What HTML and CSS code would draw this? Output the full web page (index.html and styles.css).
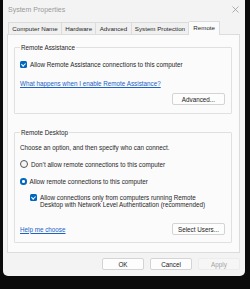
FILE: index.html
```html
<!DOCTYPE html>
<html lang="en">
<head>
    <meta charset="UTF-8">
    <meta name="viewport" content="width=device-width, initial-scale=1.0">
    <title>System Properties</title>
    <link rel="stylesheet" href="styles.css">
</head>
<body>
    <div class="window">
        <div class="titlebar">
            <span class="title">System Properties</span>
            <svg class="close" width="7" height="7" viewBox="0 0 7 7"><path d="M0.5 0.5L6.5 6.5M6.5 0.5L0.5 6.5" stroke="#9a9a9a" stroke-width="0.8"/></svg>
        </div>

        <div class="tabs">
            <div class="tab">Computer Name</div>
            <div class="tab">Hardware</div>
            <div class="tab">Advanced</div>
            <div class="tab">System Protection</div>
            <div class="tab active">Remote</div>
        </div>

        <div class="panel">
            <fieldset class="group group-assist">
                <legend>Remote Assistance</legend>
                <label class="option"><span class="check on"></span>Allow Remote Assistance connections to this computer</label>
                <a class="link link-assist" href="#">What happens when I enable Remote Assistance?</a>
                <div class="row-end">
                    <button class="btn wide">Advanced...</button>
                </div>
            </fieldset>

            <fieldset class="group group-desktop">
                <legend>Remote Desktop</legend>
                <p class="hint">Choose an option, and then specify who can connect.</p>
                <label class="option radio-row"><span class="radio"></span>Don’t allow remote connections to this computer</label>
                <label class="option radio-row"><span class="radio on"></span>Allow remote connections to this computer</label>
                <label class="option sub"><span class="check on"></span><span>Allow connections only from computers running Remote<br>Desktop with Network Level Authentication (recommended)</span></label>
                <div class="row-split">
                    <a class="link" href="#">Help me choose</a>
                    <button class="btn wide">Select Users...</button>
                </div>
            </fieldset>
        </div>

        <div class="footer">
            <button class="btn">OK</button>
            <button class="btn">Cancel</button>
            <button class="btn disabled">Apply</button>
        </div>
    </div>
</body>
</html>
```

FILE: styles.css
```css
body {
    margin: 0;
    width: 250px;
    height: 289px;
    overflow: hidden;
    background: #0b0b0b;
    font-family: "Liberation Sans", Arial, sans-serif;
    font-size: 6.3px;
    color: #262626;
}
.window {
    margin-left: 3px;
    width: 242px;
    height: 276px;
    background: #f3f3f3;
    border-radius: 0 0 5px 5px;
    box-sizing: border-box;
}
.titlebar {
    height: 19px;
    display: flex;
    align-items: center;
    justify-content: space-between;
    padding: 0 6px 0 5px;
}
.title { font-size: 7px; color: #9a9a9a; }

.tabs {
    display: flex;
    align-items: flex-end;
    margin-left: 5px;
    height: 15px;
    position: relative;
    z-index: 1;
}
.tab {
    height: 11px;
    line-height: 11px;
    padding: 0 3.3px;
    border: 1px solid #dcdcdc;
    border-bottom: none;
    border-right: none;
    background: #f0f0f0;
    font-size: 6.2px;
}
.tab:nth-child(4) { border-right: 1px solid #dcdcdc; }
.tab.active {
    height: 13px;
    line-height: 12px;
    background: #fbfbfb;
    border-right: 1px solid #dcdcdc;
    border-left: none;
    margin-bottom: -1px;
    padding: 0 4px;
}

.panel {
    margin-left: 4px;
    width: 233px;
    height: 219px;
    box-sizing: border-box;
    background: #fbfbfb;
    border: 1px solid #dcdcdc;
    padding: 9px 6px 0 6px;
}
.group {
    margin: 0;
    padding: 0 5px 0 5px;
    border: 1px solid #e0e0e0;
    border-radius: 1px;
    box-sizing: border-box;
    width: 218px;
}
.group legend { padding: 0 1px; margin-left: 0; color: #262626; }
.group-assist { height: 70px; }
.group-desktop { height: 114px; margin-top: 15px; }

.option {
    display: flex;
    align-items: center;
    gap: 3px;
    margin-top: 10px;
}
.check {
    width: 7px;
    height: 7px;
    border-radius: 1.5px;
    background: #0067c0;
    flex: none;
    position: relative;
}
.check::after {
    content: "";
    position: absolute;
    left: 2.3px;
    top: 0.8px;
    width: 1.5px;
    height: 3.2px;
    border: solid #fff;
    border-width: 0 0.8px 0.8px 0;
    transform: rotate(45deg);
}
.radio {
    width: 6px;
    height: 6px;
    border: 1px solid #555;
    border-radius: 50%;
    flex: none;
    background: #f5f5f5;
}
.radio.on {
    width: 2.6px;
    height: 2.6px;
    border: 2.2px solid #0067c0;
    background: #fff;
}
.link {
    display: block;
    color: #1a62c6;
    text-decoration: underline;
}
.link-assist { margin-top: 12px; }
.row-end {
    display: flex;
    justify-content: flex-end;
    margin-top: 6px;
    padding-right: 1px;
}
.hint { margin: 8px 0 0 0; }
.radio-row { margin-top: 9px; }
.radio-row + .radio-row { margin-top: 10px; }
.sub {
    align-items: flex-start;
    margin-left: 10px;
    margin-top: 9px;
    line-height: 7px;
}
.row-split {
    display: flex;
    justify-content: space-between;
    align-items: center;
    margin-top: 15px;
    padding-right: 1px;
}

.btn {
    font-family: inherit;
    font-size: 6.3px;
    color: #1b1b1b;
    width: 42px;
    height: 12px;
    padding: 0;
    background: #fdfdfd;
    border: 1px solid #d4d4d4;
    border-radius: 2px;
}
.btn.wide { width: 53px; }
.btn.disabled {
    background: #f6f6f6;
    color: #a3a3a3;
    border-color: #ececec;
}
.footer {
    display: flex;
    justify-content: flex-end;
    gap: 6px;
    padding: 5px 5px 0 0;
}
```
